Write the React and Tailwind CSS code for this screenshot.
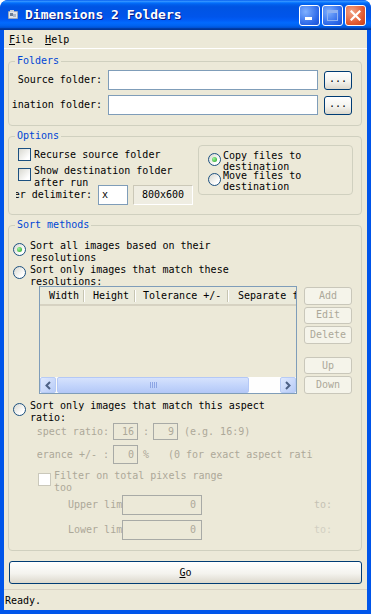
import React from "react";

const F = "font-['DejaVu_Sans_Mono','Liberation_Mono',monospace]";

function Radio({ checked, className = "" }) {
  return (
    <div className={`w-[13px] h-[13px] shrink-0 rounded-full border border-[#1c5180] bg-[linear-gradient(135deg,#d8d8d0,#ffffff_75%)] flex items-center justify-center ${className}`}>
      {checked && <div className="w-[5px] h-[5px] rounded-full bg-[radial-gradient(circle_at_35%_35%,#9cf59c,#1f9f1f)]" />}
    </div>
  );
}

function Check({ className = "", disabled }) {
  return (
    <div className={`w-[13px] h-[13px] shrink-0 border ${disabled ? "border-[#cac8bb] bg-white" : "border-[#1c5180] bg-[linear-gradient(135deg,#d8d8d0,#ffffff_80%)]"} ${className}`} />
  );
}

function Btn({ children, className = "", disabled }) {
  return (
    <div className={`flex items-center justify-center rounded-[3px] border ${disabled ? "border-[#c9c7ba] bg-[#f5f4ea] text-[#aca899]" : "border-[#003c74] bg-[linear-gradient(to_bottom,#ffffff,#f4f3ee_55%,#dcd8cc)] text-black"} ${className}`}>
      {children}
    </div>
  );
}

function Group({ title, className = "", children }) {
  return (
    <fieldset className={`ml-[4px] w-[354px] min-w-0 border border-[#d0d0bf] rounded-[4px] ${className}`}>
      <legend className="ml-[6px] px-[2px] leading-[12px] text-[#0046d5]">{title}</legend>
      {children}
    </fieldset>
  );
}

function FolderRow({ label }) {
  return (
    <div className="h-[20px] flex items-center">
      <div className="ml-[3px] w-[90px] overflow-hidden flex justify-end whitespace-nowrap">{label}</div>
      <div className="ml-[6px] w-[210px] h-[20px] border border-[#7f9db9] bg-white" />
      <Btn className="ml-[6px] w-[28px] h-[19px] text-[#4a6a8a] pb-[2px]">...</Btn>
    </div>
  );
}

function Chevron({ dir }) {
  return (
    <svg width="8" height="9" viewBox="0 0 8 9">
      {dir === "l" ? (
        <path d="M6 1 L2.5 4.5 L6 8" stroke="#4d6185" strokeWidth="2" fill="none" />
      ) : (
        <path d="M2 1 L5.5 4.5 L2 8" stroke="#4d6185" strokeWidth="2" fill="none" />
      )}
    </svg>
  );
}

function Divider() {
  return <div className="w-[2px] h-[12px] shrink-0 border-l border-l-[#c7c5b2] border-r border-r-white" />;
}

function ListView() {
  return (
    <div className="w-[258px] h-[108px] shrink-0 border border-[#7f9db9] bg-[#ece9d8] flex flex-col overflow-hidden">
      <div className="h-[19px] shrink-0 flex items-center bg-[#ebeadb] border-b-[2px] border-[#d6d2c2] whitespace-nowrap overflow-hidden">
        <div className="w-[43px] pl-[9px] shrink-0">Width</div>
        <Divider />
        <div className="w-[49px] pl-[8px] shrink-0">Height</div>
        <Divider />
        <div className="w-[91px] pl-[7px] shrink-0">Tolerance +/-</div>
        <Divider />
        <div className="flex-1 min-w-0 pl-[9px] overflow-hidden">Separate f</div>
      </div>
      <div className="flex-1" />
      <div className="h-[16px] shrink-0 flex bg-[#fbfbf8]">
        <div className="w-[16px] h-[16px] shrink-0 rounded-[2px] border border-[#b7cbf5] bg-[linear-gradient(135deg,#dfe9fe,#b7cbf7)] flex items-center justify-center">
          <Chevron dir="l" />
        </div>
        <div className="w-[192px] h-[16px] shrink-0 ml-[1px] rounded-[2px] border border-[#b4c8f6] bg-[linear-gradient(to_bottom,#d6e2fd,#c1d3fb_60%,#b5c9f7)] flex items-center justify-center gap-[1px]">
          <div className="w-[1px] h-[6px] bg-[#8ca5e4]" />
          <div className="w-[1px] h-[6px] bg-[#8ca5e4]" />
          <div className="w-[1px] h-[6px] bg-[#8ca5e4]" />
          <div className="w-[1px] h-[6px] bg-[#8ca5e4]" />
        </div>
        <div className="flex-1 bg-[#fefefe]" />
        <div className="w-[16px] h-[16px] shrink-0 rounded-[2px] border border-[#b7cbf5] bg-[linear-gradient(135deg,#dfe9fe,#b7cbf7)] flex items-center justify-center">
          <Chevron dir="r" />
        </div>
      </div>
    </div>
  );
}

function TitleBar() {
  return (
    <div className="h-[30px] shrink-0 flex items-center rounded-t-[7px] bg-[linear-gradient(to_bottom,#0058ee_0%,#3593ff_4%,#288eff_6%,#127dff_8%,#036ffc_10%,#0262ee_14%,#0057e5_20%,#0054e3_24%,#0055eb_56%,#005bf5_66%,#026afe_76%,#0062ef_86%,#0052d6_92%,#0040ab_94%,#003092_100%)]">
      <div className="ml-[7px] w-[12px] h-[12px]">
        <svg width="12" height="12" viewBox="0 0 12 12">
          <rect x="1" y="2" width="10" height="8" rx="1" fill="#9aa8bc" />
          <rect x="2" y="3" width="8" height="6" fill="#dfe4ea" />
          <rect x="3" y="4" width="3" height="3" fill="#6e7f95" />
          <rect x="6" y="5" width="3" height="3" fill="#a9b6c6" />
          <rect x="3" y="1" width="4" height="2" fill="#c8d0da" />
        </svg>
      </div>
      <div className="ml-[6px] text-[13px] font-bold text-white [text-shadow:1px_1px_#0a1883] leading-[14px]">Dimensions 2 Folders</div>
      <div className="ml-auto mr-[5px] flex gap-[2px]">
        <div className="w-[21px] h-[21px] rounded-[3px] border border-white bg-[radial-gradient(circle_at_30%_30%,#7fb0ff,#2a66e8_70%,#1c4fd0)] flex items-end pl-[5px] pb-[5px]">
          <div className="w-[7px] h-[3px] bg-white" />
        </div>
        <div className="w-[21px] h-[21px] rounded-[3px] border border-white bg-[radial-gradient(circle_at_30%_30%,#7fb0ff,#2a66e8_70%,#1c4fd0)] flex items-center justify-center">
          <div className="w-[11px] h-[11px] border border-t-[3px] border-[#8fb2f2]" />
        </div>
        <div className="w-[21px] h-[21px] rounded-[3px] border border-white bg-[radial-gradient(circle_at_30%_30%,#f2a487,#e1582f_65%,#c8401a)] flex items-center justify-center">
          <svg width="11" height="11" viewBox="0 0 11 11">
            <path d="M1.5 1.5 L9.5 9.5 M9.5 1.5 L1.5 9.5" stroke="white" strokeWidth="2.2" strokeLinecap="square" />
          </svg>
        </div>
      </div>
    </div>
  );
}

const G = "text-[#aca899]";

export default function App() {
  return (
    <div className={`w-[371px] h-[614px] flex flex-col bg-[#0055ea] rounded-t-[8px] overflow-hidden ${F} text-[10px] leading-[12px] text-black`}>
      <TitleBar />
      <div className="flex-1 mx-[4px] mb-[4px] bg-[#ece9d8] flex flex-col">
        {/* menu */}
        <div className="h-[19px] shrink-0 flex items-center pt-[1px] border-b border-white">
          <span className="ml-[5px]"><span className="underline">F</span>ile</span>
          <span className="ml-[12px]"><span className="underline">H</span>elp</span>
        </div>

        {/* Folders */}
        <Group title="Folders" className="mt-[6px] h-[71px] shrink-0">
          <div className="pt-[3px] flex flex-col gap-[5px]">
            <FolderRow label="Source folder:" />
            <FolderRow label="Destination folder:" />
          </div>
        </Group>

        {/* Options */}
        <Group title="Options" className="mt-[4px] h-[85px] shrink-0">
          <div className="flex">
            <div className="w-[189px] shrink-0 flex flex-col pt-[6px]">
              <div className="h-[13px] flex items-center pl-[9px]">
                <Check />
                <span className="ml-[3px] whitespace-nowrap">Recurse source folder</span>
              </div>
              <div className="h-[20px] mt-[4px] flex items-start pl-[9px]">
                <Check className="mt-[3px]" />
                <span className="ml-[3px] whitespace-nowrap">Show destination folder<br />after run</span>
              </div>
              <div className="h-[20px] flex items-center">
                <div className="ml-[7px] w-[76px] overflow-hidden flex justify-end whitespace-nowrap">Resolution folder delimiter:</div>
                <div className="ml-[6px] w-[30px] h-[20px] border border-[#7f9db9] bg-white pl-[3px] flex items-center">x</div>
                <div className="ml-[5px] w-[60px] h-[20px] border border-t-[#cbc8b8] border-l-[#cbc8b8] border-r-white border-b-white bg-[#efede2] flex items-center justify-center">800x600</div>
              </div>
            </div>
            <div className="mt-[3px] w-[155px] h-[50px] shrink-0 border border-[#d0d0bf] rounded-[4px] pl-[9px] pt-[3px] flex flex-col">
              <div className="h-[20px] flex items-start">
                <Radio checked className="mt-[4px]" />
                <span className="ml-[2px] leading-[11px] pt-[1px] whitespace-nowrap">Copy files to<br />destination</span>
              </div>
              <div className="h-[20px] flex items-start">
                <Radio className="mt-[4px]" />
                <span className="ml-[2px] leading-[11px] pt-[1px] whitespace-nowrap">Move files to<br />destination</span>
              </div>
            </div>
          </div>
        </Group>

        {/* Sort methods */}
        <Group title="Sort methods" className="mt-[4px] h-[332px] shrink-0">
          <div className="flex flex-col pl-[4px]">
            <div className="mt-[9px] h-[24px] flex items-start">
              <Radio checked className="mt-[3px]" />
              <span className="ml-[4px] whitespace-nowrap">Sort all images based on their<br />resolutions</span>
            </div>
            <div className="h-[22px] flex items-start">
              <Radio className="mt-[2px]" />
              <span className="ml-[4px] whitespace-nowrap">Sort only images that match these<br />resolutions:</span>
            </div>
            <div className="ml-[26px] h-[108px] flex">
              <ListView />
              <div className="ml-[7px] w-[48px] flex flex-col">
                <Btn disabled className="h-[18px] mt-[1px]">Add</Btn>
                <Btn disabled className="h-[18px] mt-[2px]">Edit</Btn>
                <Btn disabled className="h-[18px] mt-[2px]">Delete</Btn>
                <Btn disabled className="h-[18px] mt-[13px]">Up</Btn>
                <Btn disabled className="h-[18px] mt-[2px]">Down</Btn>
              </div>
            </div>
            <div className="mt-[6px] h-[22px] flex items-start">
              <Radio className="mt-[3px]" />
              <span className="ml-[4px] whitespace-nowrap">Sort only images that match this aspect<br />ratio:</span>
            </div>
            <div className={`mt-[1px] h-[17px] flex items-center ${G}`}>
              <div className="ml-[24px] w-[72px] overflow-hidden flex justify-end whitespace-nowrap">Aspect ratio:</div>
              <div className="ml-[4px] w-[25px] h-[17px] border border-[#a8aaa6] flex items-center justify-end pr-[3px]">16</div>
              <span className="ml-[5px] w-[6px]">:</span>
              <div className="ml-[4px] w-[25px] h-[17px] border border-[#a8aaa6] flex items-center justify-end pr-[3px]">9</div>
              <span className="ml-[6px] whitespace-nowrap">(e.g. 16:9)</span>
            </div>
            <div className={`mt-[5px] h-[19px] flex items-center ${G}`}>
              <div className="ml-[24px] w-[72px] overflow-hidden flex justify-end whitespace-nowrap">Tolerance +/- :</div>
              <div className="ml-[4px] w-[25px] h-[19px] border border-[#a8aaa6] flex items-center justify-end pr-[3px]">0</div>
              <span className="ml-[5px] w-[6px]">%</span>
              <div className="ml-[19px] w-[145px] overflow-hidden whitespace-nowrap">(0 for exact aspect ratio)</div>
            </div>
            <div className={`mt-[6px] h-[24px] flex items-start ${G}`}>
              <Check disabled className="ml-[25px] mt-[3px]" />
              <span className="ml-[3px] whitespace-nowrap">Filter on total pixels range<br />too</span>
            </div>
            <div className={`mt-[1px] h-[20px] flex items-center ${G}`}>
              <div className="ml-[55px] w-[54px] overflow-hidden whitespace-nowrap">Upper limit:</div>
              <div className="w-[80px] h-[20px] border border-[#a8aaa6] flex items-center justify-end pr-[5px]">0</div>
              <span className="ml-[112px] text-[#c4c1b4]">to:</span>
            </div>
            <div className={`mt-[5px] h-[20px] flex items-center ${G}`}>
              <div className="ml-[55px] w-[54px] overflow-hidden whitespace-nowrap">Lower limit:</div>
              <div className="w-[80px] h-[20px] border border-[#a8aaa6] flex items-center justify-end pr-[5px]">0</div>
              <span className="ml-[112px] text-[#d2cfc2]">to:</span>
            </div>
          </div>
        </Group>

        {/* Go */}
        <Btn className="mt-[10px] ml-[5px] w-[353px] h-[23px] shrink-0">
          <span><span className="underline">G</span>o</span>
        </Btn>

        {/* Status */}
        <div className="mt-[5px] flex-1 border-t border-[#d8d2c4] flex items-center pl-[1px] pt-[2px]">Ready.</div>
      </div>
    </div>
  );
}
